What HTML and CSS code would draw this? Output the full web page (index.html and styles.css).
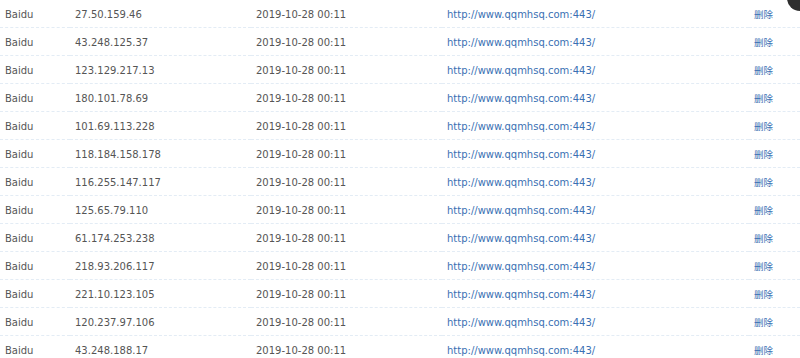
FILE: index.html
```html
<!DOCTYPE html>
<html>
<head>
<meta charset="utf-8">
<link rel="stylesheet" href="styles.css">
</head>
<body>
<div class="wrap">
<table class="list">
<colgroup><col class="c1"><col class="c2"><col class="c3"><col class="c4"><col class="c5"></colgroup>
<tbody>
<tr><td>Baidu</td><td>27.50.159.46</td><td>2019-10-28 00:11</td><td><a class="lnk">http://www.qqmhsq.com:443/</a></td><td><a class="lnk">删除</a></td></tr>
<tr><td>Baidu</td><td>43.248.125.37</td><td>2019-10-28 00:11</td><td><a class="lnk">http://www.qqmhsq.com:443/</a></td><td><a class="lnk">删除</a></td></tr>
<tr><td>Baidu</td><td>123.129.217.13</td><td>2019-10-28 00:11</td><td><a class="lnk">http://www.qqmhsq.com:443/</a></td><td><a class="lnk">删除</a></td></tr>
<tr><td>Baidu</td><td>180.101.78.69</td><td>2019-10-28 00:11</td><td><a class="lnk">http://www.qqmhsq.com:443/</a></td><td><a class="lnk">删除</a></td></tr>
<tr><td>Baidu</td><td>101.69.113.228</td><td>2019-10-28 00:11</td><td><a class="lnk">http://www.qqmhsq.com:443/</a></td><td><a class="lnk">删除</a></td></tr>
<tr><td>Baidu</td><td>118.184.158.178</td><td>2019-10-28 00:11</td><td><a class="lnk">http://www.qqmhsq.com:443/</a></td><td><a class="lnk">删除</a></td></tr>
<tr><td>Baidu</td><td>116.255.147.117</td><td>2019-10-28 00:11</td><td><a class="lnk">http://www.qqmhsq.com:443/</a></td><td><a class="lnk">删除</a></td></tr>
<tr><td>Baidu</td><td>125.65.79.110</td><td>2019-10-28 00:11</td><td><a class="lnk">http://www.qqmhsq.com:443/</a></td><td><a class="lnk">删除</a></td></tr>
<tr><td>Baidu</td><td>61.174.253.238</td><td>2019-10-28 00:11</td><td><a class="lnk">http://www.qqmhsq.com:443/</a></td><td><a class="lnk">删除</a></td></tr>
<tr><td>Baidu</td><td>218.93.206.117</td><td>2019-10-28 00:11</td><td><a class="lnk">http://www.qqmhsq.com:443/</a></td><td><a class="lnk">删除</a></td></tr>
<tr><td>Baidu</td><td>221.10.123.105</td><td>2019-10-28 00:11</td><td><a class="lnk">http://www.qqmhsq.com:443/</a></td><td><a class="lnk">删除</a></td></tr>
<tr><td>Baidu</td><td>120.237.97.106</td><td>2019-10-28 00:11</td><td><a class="lnk">http://www.qqmhsq.com:443/</a></td><td><a class="lnk">删除</a></td></tr>
<tr><td>Baidu</td><td>43.248.188.17</td><td>2019-10-28 00:11</td><td><a class="lnk">http://www.qqmhsq.com:443/</a></td><td><a class="lnk">删除</a></td></tr>
</tbody>
</table>
<div class="corner"></div>
</div>
</body>
</html>
```
FILE: styles.css
```css
html, body {
  margin: 0;
  padding: 0;
  background: #ffffff;
  overflow: hidden;
}
.wrap {
  position: relative;
  width: 800px;
  height: 358px;
  overflow: hidden;
}
.list {
  width: 800px;
  border-collapse: collapse;
  table-layout: fixed;
  font-family: "DejaVu Sans", Verdana, "Noto Sans CJK SC", sans-serif;
  font-size: 10px;
  color: #555555;
}
.c1 { width: 70px; }
.c2 { width: 181px; }
.c3 { width: 191px; }
.c4 { width: 307px; }
.c5 { width: 51px; }
.list td {
  height: 26px;
  padding: 1px 0 0 5px;
  border-bottom: 1px dashed #e3ecf5;
  white-space: nowrap;
  vertical-align: middle;
}
.lnk {
  color: #3a70b3;
  text-decoration: none;
}
.list td:last-child .lnk {
  font-family: "Noto Sans CJK SC", sans-serif;
  font-size: 9.5px;
}
.corner {
  position: absolute;
  top: -15px;
  right: -13px;
  width: 26px;
  height: 26px;
  border-radius: 50%;
  background: #2e2e2e;
}
```
